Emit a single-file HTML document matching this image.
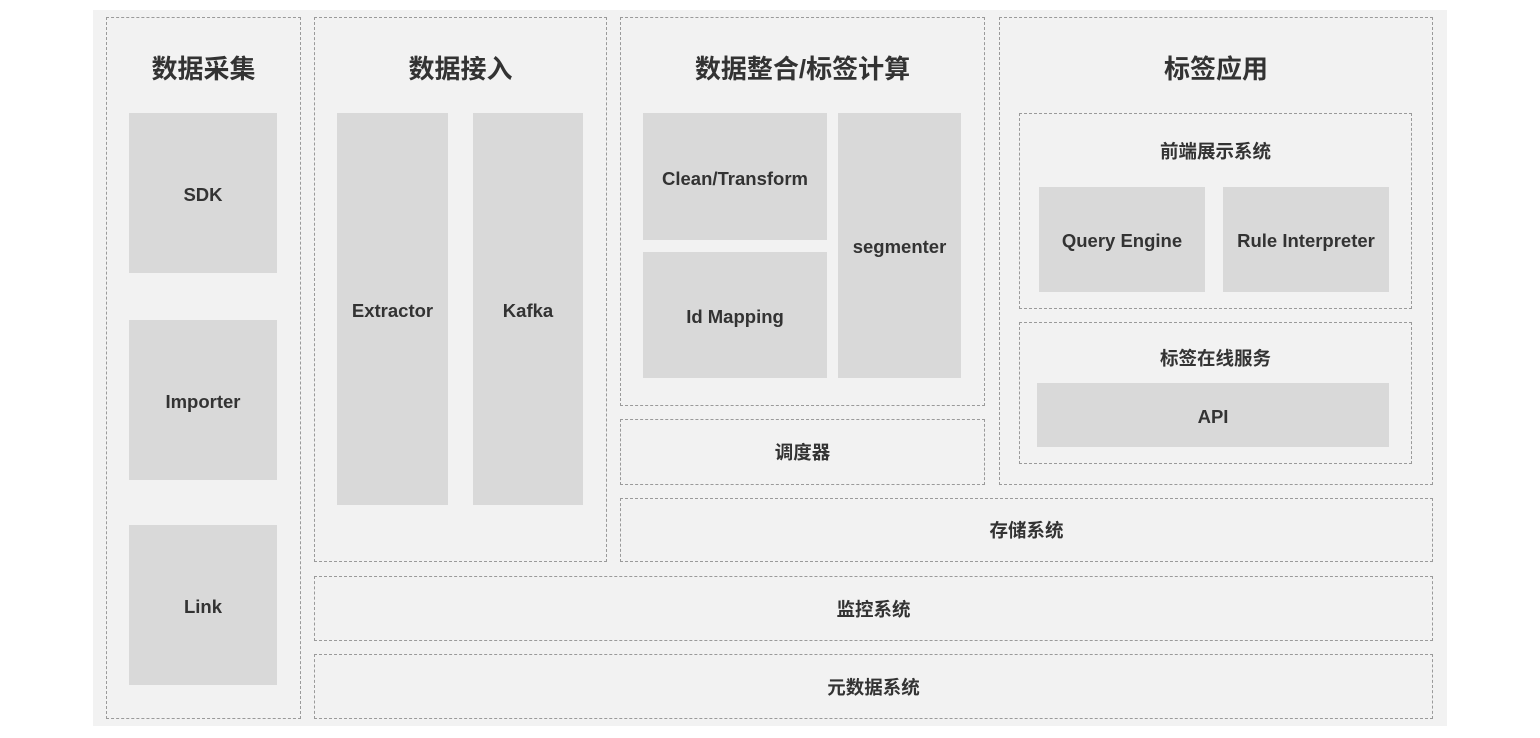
<!DOCTYPE html>
<html><head><meta charset="utf-8"><style>
*{margin:0;padding:0;box-sizing:border-box}
body{width:1540px;height:738px;background:#fff;position:relative;overflow:hidden;font-family:"Liberation Sans","Noto Sans CJK SC",sans-serif;color:#333;font-weight:bold}
.bg{position:absolute;left:93px;top:10px;width:1354px;height:716px;background:#f2f2f2}
.d{position:absolute;border:1px dashed #9a9a9a}
.b{position:absolute;background:#d9d9d9;display:flex;align-items:center;justify-content:center;font-size:18.5px;padding-top:3px}
.t{position:absolute;font-size:26px;text-align:center}
.s{position:absolute;font-size:18.5px;text-align:center}
.c{display:flex;align-items:center;justify-content:center;font-size:18.5px}
</style></head><body>
<div class="bg"></div>
<div class="d" style="left:106px;top:17px;width:195px;height:702px"></div>
<div class="t" style="left:106px;top:49px;width:195px">数据采集</div>
<div class="b" style="left:129px;top:113px;width:148px;height:160px">SDK</div>
<div class="b" style="left:129px;top:320px;width:148px;height:160px">Importer</div>
<div class="b" style="left:129px;top:525px;width:148px;height:160px">Link</div>

<div class="d" style="left:314px;top:17px;width:293px;height:545px"></div>
<div class="t" style="left:314px;top:49px;width:293px">数据接入</div>
<div class="b" style="left:337px;top:113px;width:111px;height:392px">Extractor</div>
<div class="b" style="left:473px;top:113px;width:110px;height:392px">Kafka</div>

<div class="d" style="left:620px;top:17px;width:365px;height:389px"></div>
<div class="t" style="left:620px;top:49px;width:365px">数据整合/标签计算</div>
<div class="b" style="left:643px;top:113px;width:184px;height:127px;padding-top:4px">Clean/Transform</div>
<div class="b" style="left:643px;top:252px;width:184px;height:126px;padding-top:4px">Id Mapping</div>
<div class="b" style="left:838px;top:113px;width:123px;height:265px">segmenter</div>

<div class="d c" style="left:620px;top:419px;width:365px;height:66px">调度器</div>

<div class="d" style="left:999px;top:17px;width:434px;height:468px"></div>
<div class="t" style="left:999px;top:49px;width:434px">标签应用</div>
<div class="d" style="left:1019px;top:113px;width:393px;height:196px"></div>
<div class="s" style="left:1019px;top:138px;width:393px">前端展示系统</div>
<div class="b" style="left:1039px;top:187px;width:166px;height:105px">Query Engine</div>
<div class="b" style="left:1223px;top:187px;width:166px;height:105px">Rule Interpreter</div>
<div class="d" style="left:1019px;top:322px;width:393px;height:142px"></div>
<div class="s" style="left:1019px;top:345px;width:393px">标签在线服务</div>
<div class="b" style="left:1037px;top:383px;width:352px;height:64px">API</div>

<div class="d c" style="left:620px;top:498px;width:813px;height:64px">存储系统</div>
<div class="d c" style="left:314px;top:576px;width:1119px;height:65px">监控系统</div>
<div class="d c" style="left:314px;top:654px;width:1119px;height:65px">元数据系统</div>
</body></html>
